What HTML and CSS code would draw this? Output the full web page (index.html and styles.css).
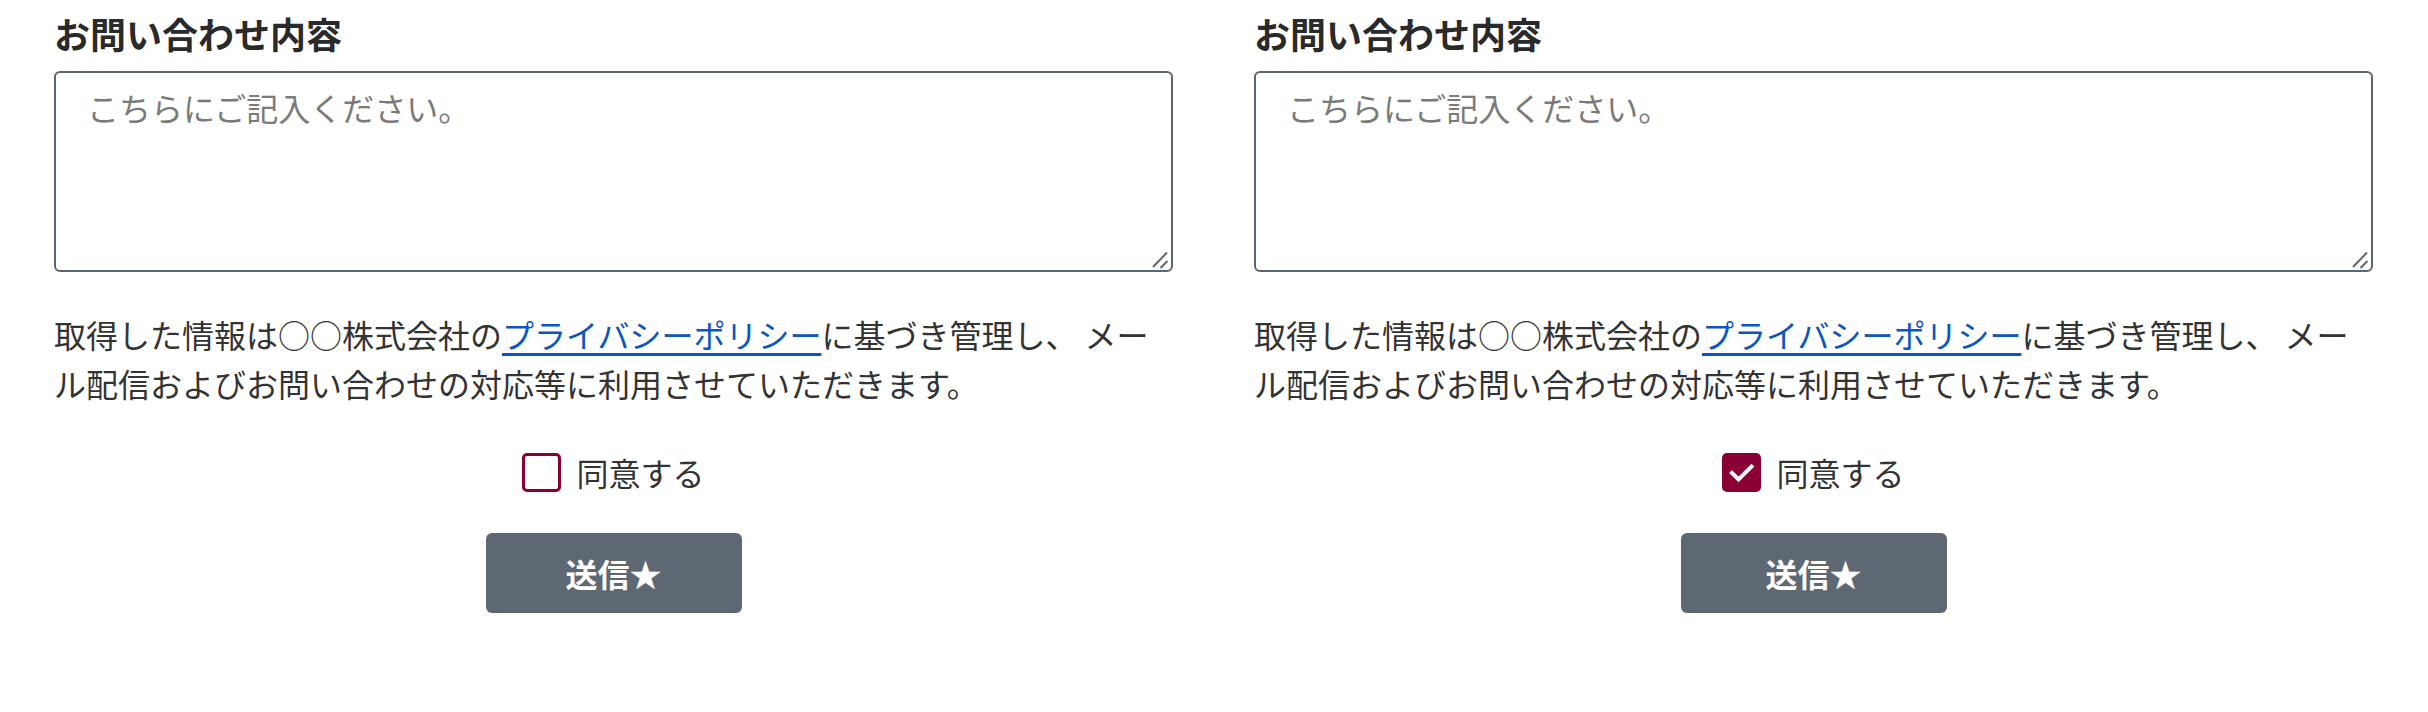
FILE: index.html
```html
<!DOCTYPE html>
<html lang="ja">
<head>
<meta charset="utf-8">
<title>お問い合わせ</title>
<link rel="stylesheet" href="styles.css">
</head>
<body>
<main class="page">
  <form class="form">
    <h2 class="form-title">お問い合わせ内容</h2>
    <div class="textarea-wrap">
      <textarea class="form-textarea" placeholder="こちらにご記入ください。"></textarea>
      <svg class="grip" viewBox="0 0 20 20" width="20" height="20"><line x1="2" y1="17" x2="16" y2="2.5" /><line x1="9.5" y1="18" x2="16.5" y2="11" /></svg>
    </div>
    <p class="form-note">取得した情報は○○株式会社の<a class="form-link" href="#">プライバシーポリシー</a>に基づき管理し、 メール配信およびお問い合わせの対応等に利用させていただきます。</p>
    <label class="agree">
      <span class="agree-box"></span>
      <span class="agree-text">同意する</span>
    </label>
    <div class="submit-row">
      <button type="button" class="submit">送信★</button>
    </div>
  </form>
  <form class="form">
    <h2 class="form-title">お問い合わせ内容</h2>
    <div class="textarea-wrap">
      <textarea class="form-textarea" placeholder="こちらにご記入ください。"></textarea>
      <svg class="grip" viewBox="0 0 20 20" width="20" height="20"><line x1="2" y1="17" x2="16" y2="2.5" /><line x1="9.5" y1="18" x2="16.5" y2="11" /></svg>
    </div>
    <p class="form-note">取得した情報は○○株式会社の<a class="form-link" href="#">プライバシーポリシー</a>に基づき管理し、 メール配信およびお問い合わせの対応等に利用させていただきます。</p>
    <label class="agree">
      <span class="agree-box agree-box--checked"><svg viewBox="0 0 39 39" width="39" height="39"><polyline points="10,20 16.5,26.5 29.5,13.5" fill="none" stroke="#fff" stroke-width="4" stroke-linecap="square"/></svg></span>
      <span class="agree-text">同意する</span>
    </label>
    <div class="submit-row">
      <button type="button" class="submit submit--wide">送信★</button>
    </div>
  </form>
</main>
</body>
</html>
```
FILE: styles.css
```css
html, body {
  margin: 0;
  padding: 0;
  background: #fff;
}
body {
  font-family: "Noto Sans CJK JP", "Noto Sans", sans-serif;
  color: #333;
}
.page {
  display: grid;
  grid-template-columns: 1fr 1fr;
  column-gap: 81px;
  padding: 6px 55px 0 54px;
}
.form {
  display: flex;
  flex-direction: column;
  margin: 0;
}
.form-title {
  margin: 0 0 11px;
  font-size: 36px;
  line-height: 54px;
  font-weight: 700;
  color: #2a2a2a;
}
.textarea-wrap {
  position: relative;
}
.form-textarea {
  box-sizing: border-box;
  display: block;
  width: 100%;
  height: 201px;
  margin: 0;
  padding: 10px 31px;
  border: 2px solid #5b6670;
  border-radius: 6px;
  font-family: inherit;
  font-size: 32px;
  line-height: 48px;
  color: #333;
  background: #fff;
  resize: none;
}
.form-textarea::placeholder {
  color: #7a7a7a;
}
.grip {
  position: absolute;
  right: 2px;
  bottom: 2px;
  stroke: #666;
  stroke-width: 2;
  pointer-events: none;
}
.form-note {
  margin: 38px 0 0;
  font-size: 32px;
  line-height: 49px;
  color: #333;
}
.form-link {
  color: #0b57c2;
  text-decoration: underline;
  text-decoration-thickness: 3px;
  text-underline-offset: 5px;
}
.agree {
  display: flex;
  align-items: center;
  justify-content: center;
  gap: 15px;
  margin-top: 40px;
  height: 48px;
}
.agree-box {
  box-sizing: border-box;
  display: block;
  width: 39px;
  height: 39px;
  border: 3px solid #8a0035;
  border-radius: 5px;
  background: #fff;
}
.agree-box--checked {
  border: none;
  background: #8a0035;
}
.agree-box svg {
  display: block;
}
.agree-text {
  font-size: 32px;
  line-height: 48px;
  color: #333;
}
.submit-row {
  display: flex;
  justify-content: center;
  margin-top: 37px;
}
.submit {
  box-sizing: border-box;
  height: 80px;
  width: 256px;
  padding: 0;
  border: none;
  border-radius: 6px;
  background: #5e6873;
  color: #fff;
  font-family: inherit;
  font-size: 32px;
  font-weight: 700;
  line-height: 80px;
}
.submit--wide {
  width: 266px;
}
```
